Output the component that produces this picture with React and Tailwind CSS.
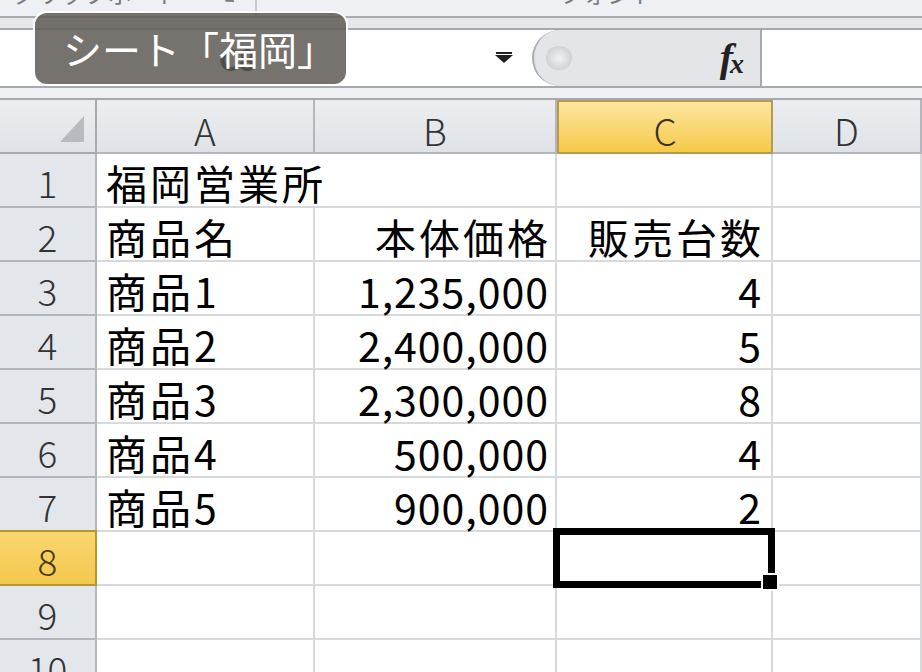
import React from "react";

const jp = "font-['Noto_Sans_CJK_JP',sans-serif]";

const rows = [
  ["福岡営業所", "", ""],
  ["商品名", "本体価格", "販売台数"],
  ["商品1", "1,235,000", "4"],
  ["商品2", "2,400,000", "5"],
  ["商品3", "2,300,000", "8"],
  ["商品4", "500,000", "4"],
  ["商品5", "900,000", "2"],
  ["", "", ""],
  ["", "", ""],
  ["", "", ""],
];

const HeadCell = ({ label, selected }) => (
  <div
    className={
      selected
        ? "flex items-end justify-center pb-[3px] border-2 border-[#b39a55] bg-linear-to-b from-[#fde69c] to-[#f6c946] text-[37px] leading-none font-light text-[#3a3220]"
        : "flex items-end justify-center pb-[3px] border-r-2 border-b-2 border-[#b3b7bd] bg-linear-to-b from-[#eceef1] to-[#dfe2e7] text-[37px] leading-none font-light text-[#333]"
    }
  >
    {label}
  </div>
);

const RowHead = ({ n, selected }) => (
  <div
    className={
      selected
        ? "flex items-end justify-center pb-[5px] border-y-2 border-r-2 border-[#b8962f] bg-linear-to-b from-[#f9d66e] to-[#f5c84e] text-[37px] leading-none font-light text-[#4a3a10] -mt-[2px]"
        : "flex items-end justify-center pb-[5px] border-r-2 border-b-2 border-[#b3b7bd] bg-[#e3e6ea] text-[37px] leading-none font-light text-[#333]"
    }
  >
    {n}
  </div>
);

// col: "a" | "b" | "c" | "d"
const Cell = ({ text, col, spill, active }) => {
  const num = /^[\d,]+$/.test(text);
  let align = "pl-[9px] tracking-[3px]";
  if (col === "b") align = num ? "justify-end pr-[6px] tracking-[1px]" : "justify-end pr-[4px] tracking-[3px]";
  if (col === "c") align = num ? "justify-end pr-[9px] tracking-[1px]" : "justify-end pr-[7px] tracking-[3px]";
  return (
    <div
      className={`relative flex items-end border-b-2 ${spill ? "" : "border-r-2"} border-[#d7d9dc] pb-[3px] text-[41px] leading-none text-black whitespace-nowrap ${align}`}
    >
      {text}
      {active && (
        <div className="absolute -left-[4px] -top-[4px] -right-[4px] -bottom-[4px] z-10 border-[7px] border-black">
          <div className="absolute -right-[11px] -bottom-[10px] w-[18px] h-[18px] bg-black border-2 border-white" />
        </div>
      )}
    </div>
  );
};

export default function App() {
  return (
    <div className={`relative w-[922px] h-[672px] overflow-hidden bg-white ${jp}`}>
      {/* ribbon remnant */}
      <div className="flex h-[18px] overflow-hidden bg-[#eef0f3] border-b-2 border-[#a9adb2]">
        <div className="flex w-[257px] border-r-2 border-[#c5c9ce] pl-[12px] gap-[34px]">
          <span className="-mt-[25px] text-[24px] text-[#7a7e83]">クリップボード</span>
          <span className="-mt-[25px] text-[24px] text-[#7a7e83]">↘</span>
        </div>
        <div className="pl-[302px]">
          <span className="block -mt-[25px] text-[24px] text-[#7a7e83]">フォント</span>
        </div>
      </div>
      <div className="h-[12px] bg-[#e6e9ec] border-b-2 border-[#a6aaaf]" />

      {/* formula bar */}
      <div className="flex h-[58px] bg-white border-b-2 border-[#a6aaaf]">
        <div className="flex w-[475px] items-center justify-center text-[30px] font-bold text-black">C8</div>
        <div className="flex w-[57px] items-center justify-center">
          <svg width="20" height="12" viewBox="0 0 20 12">
            <rect x="2" y="0" width="16" height="2" fill="#222" />
            <path d="M1 3 L19 3 L10 11 Z" fill="#222" />
          </svg>
        </div>
        <div className="flex w-[230px] items-center justify-between rounded-l-[30px] border-l-2 border-r-2 border-[#a6aaaf] bg-[#e3e5e8] pl-[12px] pr-[16px]">
          <div className="w-[26px] h-[24px] rounded-full bg-radial from-[#f6f7f8] to-[#b9bcc0] opacity-80" />
          <div className="flex items-end font-['Liberation_Serif',serif] italic font-bold text-[#222] leading-none">
            <span className="text-[40px]">f</span>
            <span className="text-[28px] -ml-[3px]">x</span>
          </div>
        </div>
        <div className="flex-1 bg-white" />
      </div>
      <div className="h-[12px] bg-[#eef0f2] border-b-2 border-[#a6aaaf]" />

      {/* sheet grid */}
      <div className="grid grid-cols-[97px_218px_242px_216px_1fr] auto-rows-[54px]">
        <div className="relative border-r-2 border-b-2 border-[#a6aaaf] bg-linear-to-b from-[#eceef1] to-[#dfe2e7]">
          <svg className="absolute left-[60px] top-[16px]" width="24" height="26" viewBox="0 0 24 26">
            <path d="M24 0 L24 26 L0 26 Z" fill="#b7bbc0" />
          </svg>
        </div>
        <HeadCell label="A" />
        <HeadCell label="B" />
        <HeadCell label="C" selected />
        <HeadCell label="D" />

        {rows.map((r, i) => (
          <React.Fragment key={i}>
            <RowHead n={i + 1} selected={i === 7} />
            <Cell text={r[0]} col="a" spill={i === 0} />
            <Cell text={r[1]} col="b" />
            <Cell text={r[2]} col="c" active={i === 7} />
            <Cell text="" col="d" />
          </React.Fragment>
        ))}
      </div>

      {/* sheet-name callout */}
      <div className="absolute left-[33px] top-[11px] flex w-[315px] h-[75px] items-center justify-center rounded-[14px] border-2 border-white bg-[#5e5954]/85 pl-[18px] text-[39px] leading-none text-white">
        シート「福岡」
      </div>
    </div>
  );
}
